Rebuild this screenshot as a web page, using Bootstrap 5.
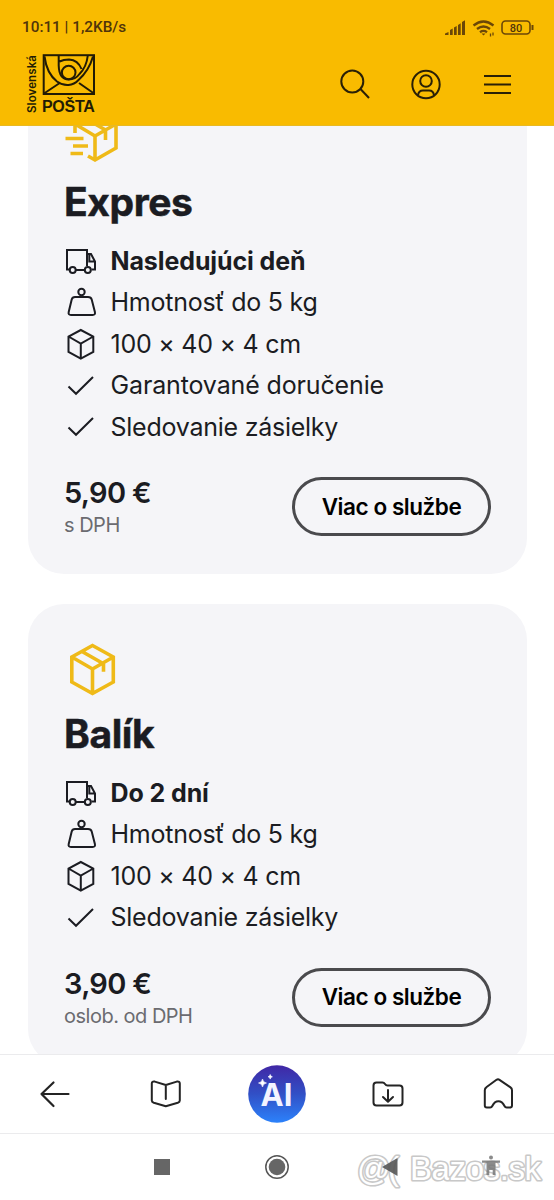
<!DOCTYPE html>
<html lang="sk">
<head>
<meta charset="utf-8">
<meta name="viewport" content="width=device-width, initial-scale=1">
<title>Slovenská pošta</title>
<link href="https://cdn.jsdelivr.net/npm/bootstrap@5.3.0/dist/css/bootstrap.min.css" rel="stylesheet">
<style>
body{font-family:Inter,"Liberation Sans",sans-serif;color:#1b1c22;height:1200px;background:#fff}
svg{display:block;flex:none;fill:none;overflow:visible}
.topbar{background:#f9bb00;height:126px;border-bottom:1px solid #e8b923}
.statusbar{height:54px;padding:1px 16px 0 22px;color:#50340a;font-family:Roboto,sans-serif;font-weight:500;font-size:15.3px}
.status-time{white-space:pre}
.brandbar{height:60px;padding:0 40px 0 26px}
.logo-side{writing-mode:vertical-rl;transform:rotate(180deg);font:600 11.5px/13px Inter,sans-serif;height:60px;color:#221b05;letter-spacing:.1px}
.logo-art{padding-left:3px}
.logo-name{font:700 16px/16px "Liberation Sans",sans-serif;color:#221b05;letter-spacing:-.3px;padding-top:1px}
.page{padding:72px 27px 0 28px}
.offer{background:#f5f5f8;border-radius:36px;padding:36px 36px 38px;margin-bottom:30px}
.offer h2{font-size:39px;line-height:48px;font-weight:700;margin:14px 0 14.5px;letter-spacing:-.4px;-webkit-text-stroke:.5px #1b1c22}
.offer li{height:41.5px;font-size:25px;line-height:41.5px;gap:12.5px;white-space:nowrap;letter-spacing:-.25px}
.offer li.fw-bold{letter-spacing:-.1px}
.offer li.wide{letter-spacing:-.14px}
.offer .bottomrow{margin-top:29px;height:59px}
.price{font-size:29px;line-height:32px;font-weight:600;letter-spacing:-.7px}
.tax{font-size:20px;line-height:32px;color:#6b6b70;font-weight:400;letter-spacing:-.5px}
.btn-more{width:199px;height:59px;border:3px solid #4a4a4d;font-size:22.5px;font-weight:600;color:#000;padding:0;white-space:nowrap;letter-spacing:-.45px}
.dock{background:#fff}
.tools{height:80px;border-top:1px solid #ebebed;border-bottom:1px solid #ebebed}
.syskeys{height:66px}
</style>
</head>
<body class="overflow-hidden">
<svg width="0" height="0" class="position-absolute" aria-hidden="true">
<defs>
<symbol id="truck" viewBox="0 0 34 34"><g fill="none" stroke="#1b1c22" stroke-width="2"><path d="M5.500 25.500H3V6h20v16M12 26h8.500M23 10h4l4 7.500v8h-3.500M25.300 10.500v7h5.700M23 10v8"/><circle cx="8.700" cy="26" r="3"/><circle cx="23.800" cy="26" r="3"/></g></symbol>
<symbol id="weight" viewBox="0 0 34 34"><g fill="none" stroke="#1b1c22" stroke-width="2"><circle cx="17.500" cy="6" r="3.200"/><path d="M17.500 9v2M11 11h13q3 0 3.700 2.500l3.200 12.500q.700 3-2.300 3H7q-3 0-2.300-3l3-12.500Q8.400 11 11 11z"/></g></symbol>
<symbol id="cube" viewBox="0 0 34 34"><path d="M16.800 3 29.300 9.500v15.500l-12.500 6.700L4.500 25V9.500zM4.500 9.500l12.300 7 12.500-7M16.800 16.500v15" fill="none" stroke="#1b1c22" stroke-width="2"/></symbol>
<symbol id="check" viewBox="0 0 34 34"><path d="M4.500 17.500l7.500 7.300L29 8" fill="none" stroke="#1b1c22" stroke-width="2"/></symbol>
</defs>
</svg>

<header class="topbar fixed-top">
  <div class="statusbar d-flex justify-content-between align-items-center">
    <span class="status-time">10:11 | 1,2KB/s</span>
    <svg width="96" height="22" viewBox="442 16 96 22">
      <path d="M445 34v-1.500l3.500-1.500v3zM450 34v-5l2.700-1.500V34zM454 34v-7.500l2.700-1.500v9zM458 34V24l2.700-1.700V34zM462 34V21l3-1.700V34z" fill="#6b4707"/>
      <g stroke="#6b4707" stroke-width="2.300"><path d="M473.500 24.500q10-8 20 0M477 28q6.500-5 13 0M480 31.200q3.500-2.500 7 0"/><path d="M490.500 35.500v-3M493 31.500v3" stroke-width="1.300"/></g>
      <path d="M481.500 32.500h4l-2 2z" fill="#6b4707"/>
      <rect x="502" y="20" width="28" height="13" rx="3.500" stroke="#6b4707" stroke-width="1.600"/><path d="M532.500 24v5" stroke="#6b4707" stroke-width="2"/>
      <text x="516" y="30.500" text-anchor="middle" font-family="Roboto" font-weight="500" font-size="11" fill="#50340a">80</text>
    </svg>
  </div>
  <div class="brandbar d-flex align-items-center justify-content-between">
    <div class="d-flex">
      <div class="logo-side">Slovenská</div>
      <div class="logo-art">
        <svg width="53" height="45" viewBox="42 54 53 45" stroke="#221b05" stroke-width="2"><rect x="43.700" y="56.200" width="50.300" height="38.800"/><path d="M44.500 57.500C46 69 50 77 57 82.500c7.500 5.500 16 4.500 21.500-1.500Q89 71.500 93 57.500M58.700 56.500v10C59 76 63 80.500 68.700 80.500M59.500 62.500q4-2 9.500-2 9 .5 12.500 9.500M87.700 57Q86.500 68 79.500 75 75.500 80.500 68.700 80.500M44 94.500L59 84.500M94 94.500L79 84"/><circle cx="68.700" cy="73.500" r="6.800"/></svg>
        <div class="logo-name">POŠTA</div>
      </div>
    </div>
    <svg width="174" height="34" viewBox="340 67 174 34" stroke="#2a2006" stroke-width="2">
      <circle cx="352.300" cy="81.500" r="11"/><path d="M360.500 89l8.500 9"/>
      <circle cx="426" cy="84.500" r="13.700"/><circle cx="426" cy="81" r="5.800"/><path d="M418 95.500q.5-5 5-5h6q4.500 0 5 5"/>
      <path d="M484 76h27M484 84.500h27M484 93h27"/>
    </svg>
  </div>
</header>

<main class="page">
  <section class="offer">
    <svg width="56" height="56" viewBox="64 108 56 56" stroke="#efba18" stroke-width="3.600"><path d="M75 133v-13l20-11 21 12v27l-21 12-7-4M75 124l20 12 21-12M95 136v24M83 117l22.500 13v10M65.500 138.500h18M73 146h15M70.500 153.500H83"/></svg>
    <h2>Expres</h2>
    <ul class="list-unstyled m-0">
      <li class="d-flex align-items-center fw-bold"><svg width="34" height="34"><use href="#truck"/></svg><span>Nasledujúci deň</span></li>
      <li class="d-flex align-items-center"><svg width="34" height="34"><use href="#weight"/></svg><span>Hmotnosť do 5 kg</span></li>
      <li class="d-flex align-items-center"><svg width="34" height="34"><use href="#cube"/></svg><span>100 × 40 × 4 cm</span></li>
      <li class="d-flex align-items-center wide"><svg width="34" height="34"><use href="#check"/></svg><span>Garantované doručenie</span></li>
      <li class="d-flex align-items-center"><svg width="34" height="34"><use href="#check"/></svg><span>Sledovanie zásielky</span></li>
    </ul>
    <div class="bottomrow d-flex justify-content-between">
      <div><div class="price">5,90 €</div><div class="tax">s DPH</div></div>
      <button class="btn btn-more rounded-pill">Viac o službe</button>
    </div>
  </section>

  <section class="offer">
    <svg width="56" height="56" viewBox="64 640 56 56" stroke="#efba18" stroke-width="3.600"><path d="M92.500 645.500l20.800 11.500v25l-20.800 11.500L71.800 682v-25zM71.800 657l20.700 12 20.800-12M92.500 669v24M82 651.500l21.500 12.300v8"/></svg>
    <h2>Balík</h2>
    <ul class="list-unstyled m-0">
      <li class="d-flex align-items-center fw-bold"><svg width="34" height="34"><use href="#truck"/></svg><span>Do 2 dní</span></li>
      <li class="d-flex align-items-center"><svg width="34" height="34"><use href="#weight"/></svg><span>Hmotnosť do 5 kg</span></li>
      <li class="d-flex align-items-center"><svg width="34" height="34"><use href="#cube"/></svg><span>100 × 40 × 4 cm</span></li>
      <li class="d-flex align-items-center"><svg width="34" height="34"><use href="#check"/></svg><span>Sledovanie zásielky</span></li>
    </ul>
    <div class="bottomrow d-flex justify-content-between">
      <div><div class="price">3,90 €</div><div class="tax">oslob. od DPH</div></div>
      <button class="btn btn-more rounded-pill">Viac o službe</button>
    </div>
  </section>
</main>

<footer class="dock fixed-bottom">
  <nav class="tools row row-cols-5 g-0 align-items-center">
    <div class="col d-flex justify-content-center"><svg width="60" height="60" viewBox="0 0 60 60" stroke="#242424" stroke-width="2.200" stroke-linecap="round" stroke-linejoin="round"><path d="M43.500 30H16.500M28.500 18.500L16.500 30l12 12"/></svg></div>
    <div class="col d-flex justify-content-center"><svg width="60" height="60" viewBox="0 0 60 60" stroke="#242424" stroke-width="2" stroke-linecap="round" stroke-linejoin="round"><path d="M29.800 21v14M29.800 21l11-3.400q3-.6 3 2V36.500q0 1.500-2 2.300l-12 3.400-12-3.400q-2-.8-2-2.300V19.600q0-2.600 3-2z"/></svg></div>
    <div class="col d-flex justify-content-center"><svg width="60" height="60" viewBox="0 0 60 60"><defs><linearGradient id="aiFill" x1="0" y1="0" x2="0" y2="1"><stop stop-color="#4027a5"/><stop offset=".5" stop-color="#3150c6"/><stop offset="1" stop-color="#2c82fb"/></linearGradient></defs><circle cx="30" cy="30" r="28.800" fill="url(#aiFill)"/><text x="29.500" y="41.500" text-anchor="middle" font-family="Inter" font-weight="700" font-size="31" fill="#f3f3ff">AI</text><path d="M15.500 15q.5 3.500 4 4-3.500.5-4 4-.5-3.500-4-4 3.500-.5 4-4zM23.200 10.500q.3 2 2.200 2.300-1.900.3-2.200 2.300-.3-2-2.200-2.300 1.900-.3 2.200-2.300z" fill="#fff" stroke="#fff" stroke-width=".6"/></svg></div>
    <div class="col d-flex justify-content-center"><svg width="60" height="60" viewBox="0 0 60 60" stroke="#242424" stroke-width="2" stroke-linecap="round" stroke-linejoin="round"><path d="M18.500 18.500h6q1.500 0 2.500 1.500t2.500 1.500h12q3 0 3 3v14q0 3-3 3h-23q-3 0-3-3v-17q0-3 3-3zM30 26v11.500M25 33l5 4.700 5-4.700"/></svg></div>
    <div class="col d-flex justify-content-center"><svg width="60" height="60" viewBox="0 0 60 60" stroke="#242424" stroke-width="2" stroke-linecap="round" stroke-linejoin="round"><path d="M27.500 15.800q1.500-1 3 0l11 7.500q1.500 1 1.500 3V41.500q0 2-2 2h-3.300q-1.500 0-2.200-1.500c-3-6.500-9.200-6.500-12.200 0q-.7 1.500-2.200 1.500h-3.300q-2 0-2-2V26.300q0-2 1.500-3z"/></svg></div>
  </nav>
  <div class="syskeys">
    <svg width="554" height="66" viewBox="0 1134 554 66">
      <rect x="154" y="1159" width="16" height="16" fill="#666"/>
      <circle cx="277" cy="1167" r="11.200" stroke="#555" stroke-width="1.500"/><circle cx="277" cy="1167" r="8.300" fill="#666"/>
      <g font-family="Liberation Sans" font-size="33" fill="#fff" stroke="#c8c8c8" stroke-width="3.200" stroke-linejoin="round" paint-order="stroke">
        <text x="357" y="1180" textLength="42">@(</text><text x="410" y="1180" textLength="131" lengthAdjust="spacing">Bazos.sk</text>
      </g>
      <path d="M382 1167l15.500-9v18z" fill="#555" fill-opacity=".9"/>
      <g fill="#777" fill-opacity=".85"><circle cx="491" cy="1157.500" r="2"/><path d="M482 1160.500h18v2.200h-4.500V1175h-2.800v-5h-3.400v5h-2.800v-12.300H482z"/></g>
    </svg>
  </div>
</footer>
<script src="https://cdn.jsdelivr.net/npm/bootstrap@5.3.0/dist/js/bootstrap.bundle.min.js"></script>
</body>
</html>
